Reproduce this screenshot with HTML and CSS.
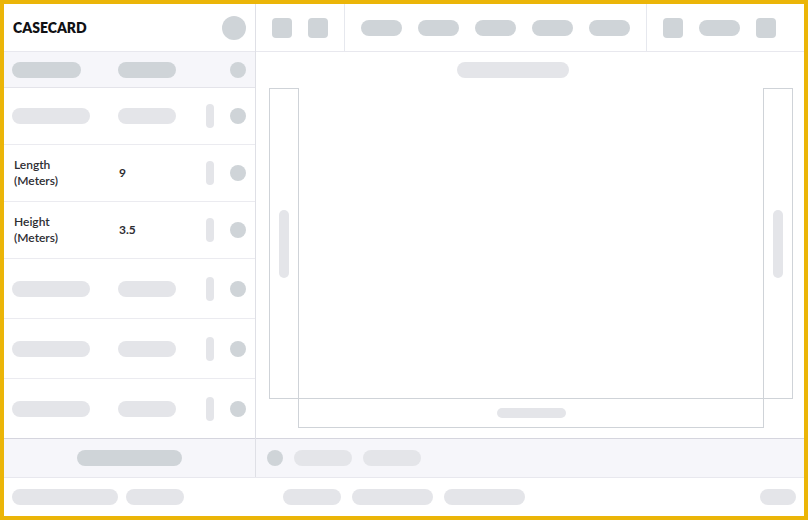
FILE: index.html
```html
<!DOCTYPE html>
<html lang="en">
<head>
<meta charset="utf-8">
<title>Casecard</title>
<link rel="stylesheet" href="styles.css">
</head>
<body>
<div class="app">
  <div class="main">
    <aside class="side">
      <header class="brand">
        <span class="brand-name">CASECARD</span>
        <span class="dot dot-lg"></span>
      </header>
      <div class="table">
        <div class="row row-head">
          <span class="sk dark w69"></span>
          <span class="sk dark w58"></span>
          <span></span>
          <span class="dot"></span>
        </div>
        <div class="row row-57">
          <span class="sk w78"></span>
          <span class="sk w58"></span>
          <span class="vpill"></span>
          <span class="dot"></span>
        </div>
        <div class="row row-57">
          <span class="label">Length<br>(Meters)</span>
          <span class="value">9</span>
          <span class="vpill"></span>
          <span class="dot"></span>
        </div>
        <div class="row row-57">
          <span class="label">Height<br>(Meters)</span>
          <span class="value">3.5</span>
          <span class="vpill"></span>
          <span class="dot"></span>
        </div>
        <div class="row row-60">
          <span class="sk w78"></span>
          <span class="sk w58"></span>
          <span class="vpill"></span>
          <span class="dot"></span>
        </div>
        <div class="row row-60">
          <span class="sk w78"></span>
          <span class="sk w58"></span>
          <span class="vpill"></span>
          <span class="dot"></span>
        </div>
        <div class="row row-60">
          <span class="sk w78"></span>
          <span class="sk w58"></span>
          <span class="vpill"></span>
          <span class="dot"></span>
        </div>
      </div>
      <div class="side-foot">
        <span class="sk dark w105"></span>
      </div>
    </aside>
    <section class="work">
      <div class="toolbar">
        <div class="tgroup">
          <span class="sq"></span>
          <span class="sq"></span>
        </div>
        <div class="tgroup">
          <span class="tpill"></span>
          <span class="tpill"></span>
          <span class="tpill"></span>
          <span class="tpill"></span>
          <span class="tpill"></span>
        </div>
        <div class="tgroup">
          <span class="sq"></span>
          <span class="tpill"></span>
          <span class="sq"></span>
        </div>
      </div>
      <div class="canvas">
        <span class="sk canvas-title"></span>
        <div class="stage">
          <div class="frame frame-l"><span class="vbar"></span></div>
          <div class="page">
            <div class="page-body"></div>
            <div class="page-foot"><span class="hbar"></span></div>
          </div>
          <div class="frame frame-r"><span class="vbar"></span></div>
        </div>
      </div>
      <div class="work-foot">
        <span class="dot"></span>
        <span class="sk w58"></span>
        <span class="sk w58"></span>
      </div>
    </section>
  </div>
  <footer class="statusbar">
    <div class="status-left">
      <span class="sk w106"></span>
      <span class="sk w58"></span>
    </div>
    <div class="status-right">
      <span class="sk w58"></span>
      <span class="sk w81"></span>
      <span class="sk w81"></span>
      <span class="sk w36 push"></span>
    </div>
  </footer>
</div>
</body>
</html>
```
FILE: styles.css
```css
* {
  box-sizing: border-box;
  margin: 0;
  padding: 0;
}

body {
  margin: 0;
  width: 808px;
  height: 520px;
  background: #ffffff;
  font-family: Lato, "Liberation Sans", sans-serif;
  color: #2e2e33;
}

.app {
  width: 808px;
  height: 520px;
  border: 4px solid #ebb508;
  display: flex;
  flex-direction: column;
  background: #ffffff;
}

.main {
  display: flex;
  height: 473px;
}

/* ---------- left side ---------- */
.side {
  width: 252px;
  flex: 0 0 252px;
  border-right: 1px solid #dfe0e6;
  display: flex;
  flex-direction: column;
}

.brand {
  height: 48px;
  border-bottom: 1px solid #e8e8ee;
  display: flex;
  align-items: center;
  justify-content: space-between;
  padding: 0 9px 0 9px;
}

.brand-name {
  font-size: 14px;
  font-weight: 800;
  color: #111114;
  letter-spacing: 0;
}

.table {
  height: 386px;
  display: flex;
  flex-direction: column;
}

.row {
  display: grid;
  grid-template-columns: 106px 88px 24px 16px;
  align-items: center;
  padding: 0 9px 0 8px;
  border-bottom: 1px solid #ebebf0;
}

.row-head {
  height: 36px;
  background: #f6f6fa;
  border-bottom-color: #e4e4ea;
}

.row-57 {
  height: 57px;
}

.row-60 {
  height: 60px;
}

.row:last-child {
  border-bottom: none;
  height: 59px;
}

.label {
  font-size: 12px;
  line-height: 16px;
  font-weight: 600;
  padding-left: 2px;
  color: #2e2e33;
}

.value {
  font-size: 12px;
  line-height: 16px;
  font-weight: 700;
  padding-left: 1px;
  color: #2e2e33;
}

.side-foot {
  height: 39px;
  border-top: 1px solid #d5d5de;
  background: #f6f6fa;
  display: flex;
  align-items: center;
  justify-content: center;
}

/* ---------- skeleton shapes ---------- */
.sk {
  display: block;
  height: 16px;
  border-radius: 8px;
  background: #e4e5e9;
}

.sk.dark {
  background: #cfd4d8;
}

.w36 { width: 36px; }
.w58 { width: 58px; }
.w69 { width: 69px; }
.w78 { width: 78px; }
.w81 { width: 81px; }
.w105 { width: 105px; }
.w106 { width: 106px; }

.dot {
  display: block;
  width: 16px;
  height: 16px;
  border-radius: 50%;
  background: #cfd4d8;
}

.dot-lg {
  width: 24px;
  height: 24px;
}

.vpill {
  display: block;
  width: 8px;
  height: 24px;
  border-radius: 4px;
  background: #e4e5e9;
}

/* ---------- work area ---------- */
.work {
  flex: 1;
  display: flex;
  flex-direction: column;
}

.toolbar {
  height: 48px;
  border-bottom: 1px solid #e8e8ee;
  display: flex;
}

.tgroup {
  display: flex;
  align-items: center;
  gap: 16px;
  padding: 0 16px;
  border-right: 1px solid #e6e8ee;
}

.tgroup:last-child {
  border-right: none;
}

.sq {
  display: block;
  width: 20px;
  height: 20px;
  border-radius: 4px;
  background: #cfd4d8;
}

.tpill {
  display: block;
  width: 41px;
  height: 16px;
  border-radius: 8px;
  background: #cfd4d8;
}

.canvas {
  height: 386px;
  padding: 10px 11px 10px 13px;
  display: flex;
  flex-direction: column;
  gap: 10px;
}

.canvas-title {
  width: 112px;
  margin-left: 188px;
}

.stage {
  display: flex;
  align-items: flex-start;
  height: 340px;
}

.frame {
  width: 29px;
  height: 311px;
  border: 1px solid #cfd3d8;
  display: flex;
  align-items: center;
  justify-content: center;
}

.frame-l {
  border-right: none;
}

.frame-r {
  border-left: none;
}

.vbar {
  display: block;
  width: 10px;
  height: 68px;
  border-radius: 5px;
  background: #e4e5e9;
}

.page {
  width: 466px;
  height: 340px;
  border: 1px solid #cfd3d8;
  border-top: none;
  display: flex;
  flex-direction: column;
}

.page-body {
  height: 311px;
  border-bottom: 1px solid #cfd3d8;
}

.page-foot {
  flex: 1;
  display: flex;
  align-items: center;
  justify-content: center;
}

.hbar {
  display: block;
  width: 69px;
  height: 10px;
  border-radius: 5px;
  background: #e4e5e9;
}

.work-foot {
  height: 39px;
  border-top: 1px solid #d5d5de;
  background: #f6f6fa;
  display: flex;
  align-items: center;
  gap: 11px;
  padding-left: 11px;
}

/* ---------- status bar ---------- */
.statusbar {
  height: 39px;
  border-top: 1px solid #e8e8ee;
  display: grid;
  grid-template-columns: 252px 1fr;
}

.status-left {
  display: flex;
  align-items: center;
  gap: 8px;
  padding-left: 8px;
}

.status-right {
  display: flex;
  align-items: center;
  gap: 11px;
  padding: 0 8px 0 27px;
}

.push {
  margin-left: auto;
}
```
